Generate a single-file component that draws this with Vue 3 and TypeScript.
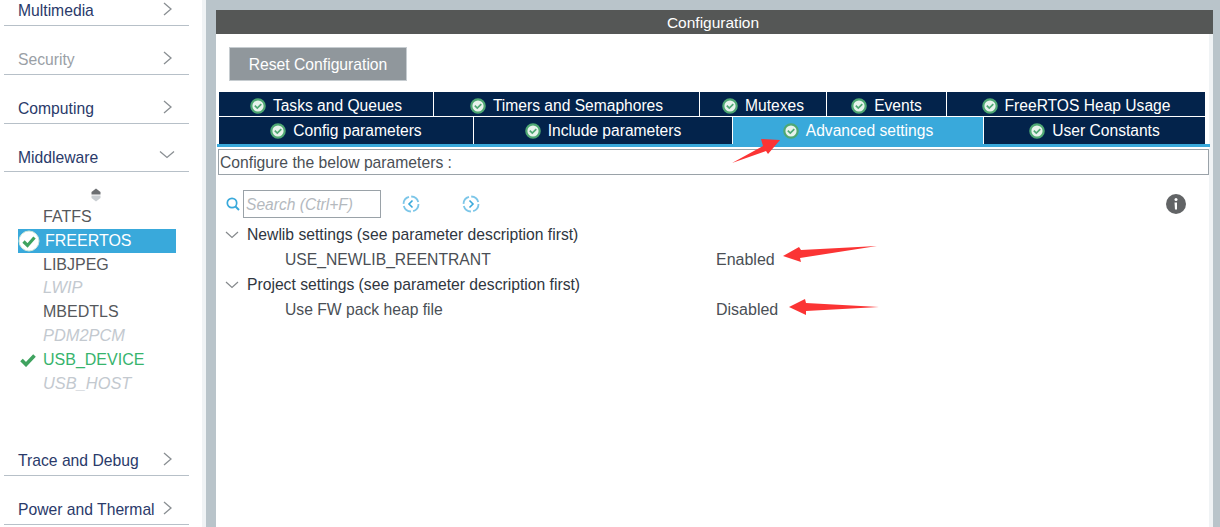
<script setup lang="ts">
interface Section { name: string; muted?: boolean }
const before: Section[] = [{ name: 'Multimedia' }, { name: 'Security', muted: true }, { name: 'Computing' }]
const after: Section[] = [{ name: 'Trace and Debug' }, { name: 'Power and Thermal' }]
const items = [
  { name: 'FATFS', kind: 'plain' },
  { name: 'FREERTOS', kind: 'active' },
  { name: 'LIBJPEG', kind: 'plain' },
  { name: 'LWIP', kind: 'off' },
  { name: 'MBEDTLS', kind: 'plain' },
  { name: 'PDM2PCM', kind: 'off' },
  { name: 'USB_DEVICE', kind: 'ok' },
  { name: 'USB_HOST', kind: 'off' },
]
const row1 = [
  { name: 'Tasks and Queues', w: 215 },
  { name: 'Timers and Semaphores', w: 266 },
  { name: 'Mutexes', w: 127 },
  { name: 'Events', w: 120 },
  { name: 'FreeRTOS Heap Usage', w: 259 },
]
const row2 = [
  { name: 'Config parameters', w: 255 },
  { name: 'Include parameters', w: 259 },
  { name: 'Advanced settings', w: 251, active: true },
  { name: 'User Constants', w: 222 },
]
</script>

<template>
  <div class="page">
    <aside class="side">
      <div class="scroller">
        <div v-for="s in before" :key="s.name" class="sec" :class="{ muted: s.muted }">
          <span>{{ s.name }}</span>
          <svg class="chev" width="12" height="14" viewBox="0 0 12 14"><path d="M2 1l7 6-7 6" fill="none" stroke="#8a8f93" stroke-width="1.3" /></svg>
        </div>
        <div class="sec mid">
          <span>Middleware</span>
          <svg class="chev down" width="16" height="10" viewBox="0 0 16 10"><path d="M1 1.500l7 6 7-6" fill="none" stroke="#8a8f93" stroke-width="1.3" /></svg>
        </div>
        <div class="mark">
          <svg width="12" height="14" viewBox="0 0 12 14"><path d="M6 0.500l4.500 3.500v2.500h-9V4z" fill="#6c6f72" /><path d="M1.500 7.500h9V10L6 13.500 1.500 10z" fill="#c9ced2" /></svg>
        </div>
        <ul class="list">
          <li v-for="i in items" :key="i.name" :class="i.kind">
            <svg v-if="i.kind === 'active'" class="li-ic" width="22" height="22" viewBox="0 0 22 22">
              <circle cx="11" cy="11" r="10" fill="#fff" stroke="#cfe8d8" stroke-width="1" />
              <path d="M5.500 11.500l4 4 7-8" fill="none" stroke="#3fa35f" stroke-width="3.200" />
            </svg>
            <svg v-if="i.kind === 'ok'" class="li-ok" width="16" height="14" viewBox="0 0 16 14">
              <path d="M1.500 7l4.500 4.500 8.500-9" fill="none" stroke="#3fa35f" stroke-width="3.600" />
            </svg>
            <span>{{ i.name }}</span>
          </li>
        </ul>
        <div v-for="s in after" :key="s.name" class="sec">
          <span>{{ s.name }}</span>
          <svg class="chev" width="12" height="14" viewBox="0 0 12 14"><path d="M2 1l7 6-7 6" fill="none" stroke="#8a8f93" stroke-width="1.3" /></svg>
        </div>
      </div>
    </aside>

    <main class="main">
      <header class="head">Configuration</header>
      <div class="toolbar"><button class="reset" type="button">Reset Configuration</button></div>
      <div class="tabs">
        <div class="row r1">
          <div v-for="t in row1" :key="t.name" class="tab" :style="{ width: t.w + 'px' }">
            <svg class="tic" width="16" height="16" viewBox="0 0 16 16"><circle cx="8" cy="8" r="6.700" fill="#e8f3ec" stroke="#4fa873" stroke-width="2.200" /><path d="M4.800 7.600l2.500 2.500 4-4" fill="none" stroke="#4fa873" stroke-width="1.700" /></svg>
            <span>{{ t.name }}</span>
          </div>
        </div>
        <div class="row r2">
          <div v-for="t in row2" :key="t.name" class="tab" :class="{ on: t.active }" :style="{ width: t.w + 'px' }">
            <svg class="tic" width="16" height="16" viewBox="0 0 16 16"><circle cx="8" cy="8" r="6.700" fill="#e8f3ec" stroke="#4fa873" stroke-width="2.200" /><path d="M4.800 7.600l2.500 2.500 4-4" fill="none" stroke="#4fa873" stroke-width="1.700" /></svg>
            <span>{{ t.name }}</span>
          </div>
        </div>
      </div>
      <div class="rule"></div>
      <div class="box">Configure the below parameters :</div>
      <div class="search">
        <svg width="16" height="16" viewBox="0 0 16 16"><circle cx="7" cy="7" r="4.700" fill="none" stroke="#39a9db" stroke-width="1.700" /><path d="M10.500 10.500l3.500 3.500" stroke="#39a9db" stroke-width="1.900" /></svg>
        <div class="inp">Search (Ctrl+F)</div>
        <svg class="nav first" width="18" height="18" viewBox="0 0 18 18"><circle cx="9" cy="9" r="7.500" fill="none" stroke="#7cc6e8" stroke-width="1.800" stroke-dasharray="9.500 2.280" /><path d="M10.500 5.500L7 9l3.500 3.500" fill="none" stroke="#39a9db" stroke-width="1.600" /></svg>
        <svg class="nav" width="18" height="18" viewBox="0 0 18 18"><circle cx="9" cy="9" r="7.500" fill="none" stroke="#7cc6e8" stroke-width="1.800" stroke-dasharray="9.500 2.280" /><path d="M7.500 5.500L11 9l-3.500 3.500" fill="none" stroke="#39a9db" stroke-width="1.600" /></svg>
        <svg class="info" width="20" height="20" viewBox="0 0 20 20"><circle cx="10" cy="10" r="10" fill="#626466" /><circle cx="10" cy="5.500" r="1.500" fill="#fff" /><path d="M8.500 8.500h2.500v7h-2z" fill="#fff" /></svg>
      </div>
      <div class="tree">
        <div class="group"><svg width="14" height="8" viewBox="0 0 14 8"><path d="M1 1l6 5.500L13 1" fill="none" stroke="#85898c" stroke-width="1.200" /></svg><span>Newlib settings (see parameter description first)</span></div>
        <div class="param"><span class="pname">USE_NEWLIB_REENTRANT</span><span class="pval">Enabled</span></div>
        <div class="group"><svg width="14" height="8" viewBox="0 0 14 8"><path d="M1 1l6 5.500L13 1" fill="none" stroke="#85898c" stroke-width="1.200" /></svg><span>Project settings (see parameter description first)</span></div>
        <div class="param"><span class="pname">Use FW pack heap file</span><span class="pval">Disabled</span></div>
      </div>
    </main>

    <svg class="marks" width="1220" height="527" viewBox="0 0 1220 527">
      <polygon fill="#fb3434" points="732,163 763,146 761,139 780,140 768,154 766,151" />
      <polygon fill="#fb3434" points="877,246 801,250 799,247 783,256 801,262 800,258" />
      <polygon fill="#fb3434" points="879,307 806,303 805,299 789,307 806,315 806,311" />
    </svg>
  </div>
</template>

<style>
html, body { margin: 0; background: #fff; }
</style>

<style scoped>
.page {
  position: relative;
  display: flex;
  width: 1220px;
  height: 527px;
  overflow: hidden;
  background: #b9c4ca;
  font-family: "Liberation Sans", Arial, sans-serif;
  font-size: 15.700px;
  color: #4a4f55;
}
.marks { position: absolute; left: 0; top: 0; pointer-events: none; }
.side {
  flex: none;
  width: 202px;
  height: 100%;
  margin-right: 10px;
  background: #fff;
  border-right: 4px solid #f0f3f5;
  overflow: hidden;
}
.scroller { margin-top: -23px; }
.sec {
  display: flex;
  align-items: flex-end;
  justify-content: space-between;
  box-sizing: border-box;
  width: 185px;
  height: 49px;
  margin-left: 4px;
  padding: 0 15px 5px 14px;
  border-bottom: 1px solid #b7c0c8;
  color: #2a3a6a;
}
.sec.mid { height: 48px; padding-bottom: 4px; }
.sec.muted { color: #9aa0a6; }
.chev { margin-bottom: 4px; }
.chev.down { margin-right: -1px; margin-bottom: 7px; }
.mark { box-sizing: border-box; height: 33px; padding: 16px 0 0 90px; }
.mark svg { display: block; }
.list {
  list-style: none;
  margin: 0 0 0 18px;
  padding: 0;
  width: 158px;
  height: 222px;
  font-size: 16px;
}
.list li {
  position: relative;
  height: 23.800px;
  line-height: 23.800px;
  padding-left: 25px;
  color: #55585c;
}
.list li.active { background: #39a9db; color: #fff; padding-left: 27px; }
.list li.off { color: #c3c9cf; font-style: italic; font-size: 16.400px; }
.list li.ok { color: #37b46d; }
.li-ic { position: absolute; left: 0; top: 1px; }
.li-ok { position: absolute; left: 2px; top: 5px; }

.main {
  flex: none;
  width: 993px;
  height: 100%;
  margin-top: 10px;
  background: #fff;
  border-right: 4px solid #f0f3f5;
}
.head {
  box-sizing: border-box;
  height: 24px;
  line-height: 25px;
  width: 997px;
  padding-right: 3px;
  background: #555756;
  color: #fff;
  text-align: center;
  font-size: 15.500px;
}
.toolbar { padding: 13px 0 11px 13px; }
.reset {
  display: block;
  box-sizing: border-box;
  width: 178px;
  height: 34px;
  padding: 2px 0 0;
  border: 1px solid #c6ccd0;
  background: #90979c;
  color: #fff;
  font: inherit;
}
.tabs { margin-left: 3px; font-size: 15.600px; }
.row { display: flex; background: #fff; }
.r1 { height: 24px; margin-bottom: 1px; }
.r1 .tab { padding-top: 3px; }
.r2 { height: 27px; }
.tab {
  flex: none;
  display: flex;
  align-items: center;
  justify-content: center;
  gap: 7px;
  box-sizing: border-box;
  border-right: 1px solid #fff;
  background: #03234b;
  color: #fff;
}
.tab.on { background: #39a9db; }
.tic { flex: none; }
.rule { height: 3px; width: 993px; margin-left: 1px; background: #39a9db; }
.box {
  box-sizing: border-box;
  height: 26px;
  width: 991px;
  margin: 2px 0 0 2px;
  border: 1px solid #9aa2a8;
  line-height: 25px;
  padding-left: 1px;
}
.search {
  position: relative;
  display: flex;
  align-items: center;
  height: 28px;
  margin-top: 15px;
  padding-left: 9px;
}
.inp {
  box-sizing: border-box;
  width: 138px;
  height: 28px;
  margin-left: 2px;
  border: 1px solid #9aa2a8;
  line-height: 27px;
  padding-left: 2px;
  color: #b4b9be;
  font-style: italic;
  font-size: 15.600px;
}
.nav { margin-left: 42px; }
.nav.first { margin-left: 21px; }
.info { position: absolute; left: 950px; top: 4px; }
.tree { margin-top: 4px; }
.group {
  display: flex;
  align-items: center;
  height: 25px;
  padding-left: 9px;
  color: #2f3640;
}
.group svg { margin-right: 8px; }
.param {
  display: flex;
  align-items: center;
  height: 25px;
  padding-left: 69px;
}
.pname { width: 431px; }
.pval { font-size: 16px; }
</style>
